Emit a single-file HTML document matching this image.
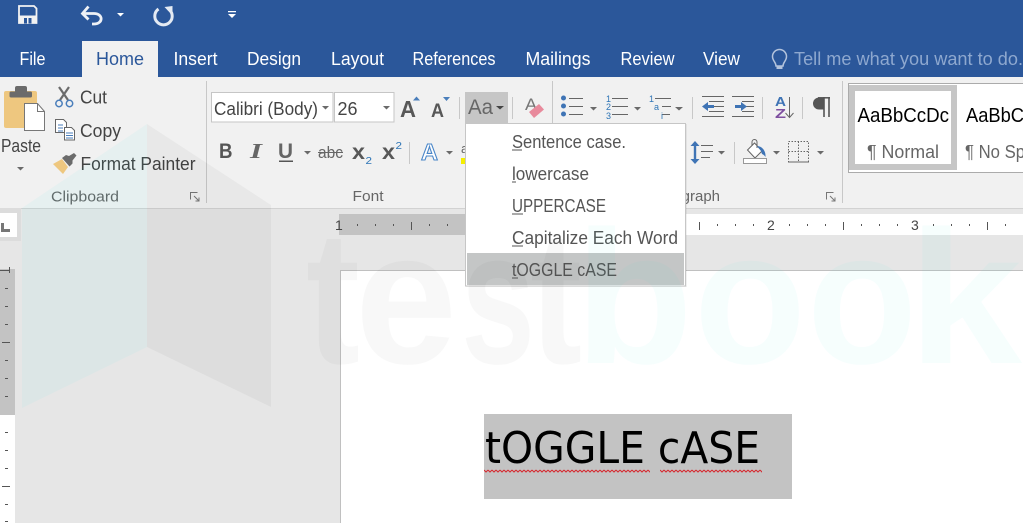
<!DOCTYPE html>
<html><head><meta charset="utf-8"><title>Toggle case</title>
<style>
html,body{margin:0;padding:0;background:#fff;width:1023px;height:532px;overflow:hidden}
svg{display:block;font-family:"Liberation Sans",sans-serif}
.tab{font-size:18px;fill:#fff}
.rb{font-size:18px;fill:#444}
.gl{font-size:15px;fill:#666}
.mi{font-size:18px;fill:#555}
.tri{fill:#6a6a6a}
.sep{stroke:#c8c8c8;stroke-width:1}
.ln{stroke:#666;stroke-width:1;fill:none}
</style></head><body>
<svg width="1023" height="532" viewBox="0 0 1023 532" xmlns="http://www.w3.org/2000/svg">
<defs>
<pattern id="wave" x="484" y="469" width="4" height="4" patternUnits="userSpaceOnUse">
<path d="M0 1l2 2 2-2" fill="none" stroke="#d6262c" stroke-width="1"/>
</pattern>
</defs>
<!-- backgrounds -->
<rect width="1023" height="532" fill="#fff"/>
<rect width="1023" height="77" fill="#2b579a"/>
<rect y="77" width="1023" height="131" fill="#f1f1f1"/>
<rect y="208" width="1023" height="315" fill="#e6e6e6"/>
<rect y="208" width="1023" height="1" fill="#d2d2d2"/>
<rect x="82" y="41" width="76" height="36" fill="#f1f1f1"/>

<!-- QAT -->
<path d="M19 6h15l2.500 2.500v14.500h-17.500z" fill="none" stroke="#f2f2f2" stroke-width="1.800"/>
<rect x="19" y="15.500" width="17.500" height="8" fill="#f2f2f2"/>
<rect x="24" y="18" width="3" height="5.500" fill="#2b579a"/>
<rect x="28.500" y="18" width="3" height="5.500" fill="#2b579a"/>
<path d="M83 13.500h11c9.500 0 9.500 10.500 0 10.500h-2" fill="none" stroke="#eef1f6" stroke-width="2.800"/>
<path d="M88.500 6.500l-6 7 6 6" fill="none" stroke="#eef1f6" stroke-width="2.800"/>
<path d="M158.500 9a8.700 8.700 0 1 0 10 0" fill="none" stroke="#e4eaf3" stroke-width="3"/>
<path d="M172.500 6v9.500l-8-8.500z" fill="#e4eaf3"/>
<path d="M117 13h7l-3.500 3.500z" fill="#fff"/>
<path d="M228 11h8v1.200h-8zM228 14h8l-4 4z" fill="#fff"/>

<!-- tabs -->
<text class="tab" x="19.500" y="65" textLength="26" lengthAdjust="spacingAndGlyphs">File</text>
<text class="tab" x="96" y="65" textLength="48" lengthAdjust="spacingAndGlyphs" style="fill:#2b579a">Home</text>
<text class="tab" x="173.500" y="65" textLength="44" lengthAdjust="spacingAndGlyphs">Insert</text>
<text class="tab" x="247" y="65" textLength="54" lengthAdjust="spacingAndGlyphs">Design</text>
<text class="tab" x="331" y="65" textLength="53" lengthAdjust="spacingAndGlyphs">Layout</text>
<text class="tab" x="412.500" y="65" textLength="83" lengthAdjust="spacingAndGlyphs">References</text>
<text class="tab" x="525.500" y="65" textLength="65" lengthAdjust="spacingAndGlyphs">Mailings</text>
<text class="tab" x="620.500" y="65" textLength="54" lengthAdjust="spacingAndGlyphs">Review</text>
<text class="tab" x="703" y="65" textLength="37" lengthAdjust="spacingAndGlyphs">View</text>
<path d="M776 66c0-4-3.500-5-3.500-9.500a7 7 0 0 1 14 0c0 4.500-3.500 5.500-3.500 9.500z" fill="none" stroke="#b3c3dc" stroke-width="1.500"/>
<rect x="776.500" y="66" width="6" height="3" fill="#b3c3dc"/>
<text class="tab" x="794" y="65" textLength="229" lengthAdjust="spacingAndGlyphs" style="fill:#8ea8cf">Tell me what you want to do.</text>

<!-- clipboard group -->
<rect x="4" y="91" width="33" height="37" rx="2" fill="#eec77f"/>
<rect x="9.500" y="91.500" width="22.500" height="6" rx="1.500" fill="#6b6b6b"/>
<rect x="15" y="86" width="12" height="7" rx="2" fill="#6b6b6b"/>
<path d="M24.500 103.500h13l7 8v19h-20z" fill="#fff" stroke="#777"/>
<path d="M37.500 103.500v8h7" fill="none" stroke="#777"/>
<text class="rb" x="1" y="152" textLength="40" lengthAdjust="spacingAndGlyphs">Paste</text>
<path d="M17 167h7l-3.500 3.500z" class="tri"/>
<path d="M59 87l9 13M69 87l-9 13" stroke="#6b6b6b" stroke-width="2.200" fill="none"/>
<circle cx="59" cy="103.500" r="3.200" fill="none" stroke="#4a7ebb" stroke-width="1.500"/>
<circle cx="69.500" cy="103.500" r="3.200" fill="none" stroke="#4a7ebb" stroke-width="1.500"/>
<text class="rb" x="80" y="103.500" textLength="27" lengthAdjust="spacingAndGlyphs">Cut</text>
<path d="M55.500 119.500h8l3 3v10h-11z" fill="#fff" stroke="#666"/>
<path d="M64.500 127.500h7l3 3v9.500h-10z" fill="#fff" stroke="#666"/>
<path d="M66 133h7M66 135.500h7M66 138h7" stroke="#4a7ebb"/>
<path d="M58 125h5M58 128h5M58 131h5" stroke="#4a7ebb"/>
<text class="rb" x="80" y="137" textLength="41" lengthAdjust="spacingAndGlyphs">Copy</text>
<path d="M53 164l9-5 6 8-5 7z" fill="#eec77f"/>
<path d="M62 158l4-3 3 1 5-3 2.500 2.500-4 5 0 3-3 3z" fill="#6b6b6b"/>
<text class="rb" x="80.500" y="170" textLength="115" lengthAdjust="spacingAndGlyphs">Format Painter</text>
<text class="gl" x="51" y="201.500" textLength="68" lengthAdjust="spacingAndGlyphs">Clipboard</text>
<path d="M190.500 199.500v-7h7M194 196l5 5M199 197.500v3.500h-3.500" fill="none" stroke="#777"/>
<path class="sep" d="M206.500 81v122"/>

<!-- font group -->
<rect x="211.500" y="92.500" width="121.500" height="29.500" fill="#fff" stroke="#c6c6c6"/>
<rect x="334.500" y="92.500" width="59.500" height="29.500" fill="#fff" stroke="#c6c6c6"/>
<text class="rb" x="214" y="115" textLength="104" lengthAdjust="spacingAndGlyphs">Calibri (Body)</text>
<text class="rb" x="337.500" y="115" textLength="20" lengthAdjust="spacingAndGlyphs">26</text>
<path d="M322 106h7l-3.500 3.500zM383 106h7l-3.500 3.500z" class="tri"/>
<text x="400" y="117" font-size="23" font-weight="bold" fill="#585858" textLength="16" lengthAdjust="spacingAndGlyphs">A</text>
<path d="M413 100.500l3.500-4 3.500 4z" fill="#4a7ebb"/>
<text x="431" y="117" font-size="19.500" font-weight="bold" fill="#585858" textLength="13" lengthAdjust="spacingAndGlyphs">A</text>
<path d="M443 97h7l-3.500 4z" fill="#4a7ebb"/>
<path class="sep" d="M459.500 97v22"/>
<rect x="465" y="92" width="43" height="32" fill="#c6c6c6"/>
<text x="468" y="114" font-size="21" fill="#666" textLength="25" lengthAdjust="spacingAndGlyphs">Aa</text>
<path d="M496 106h8l-4 3.500z" fill="#444"/>
<path class="sep" d="M512.500 97v22"/>
<text x="525" y="110" font-size="17" fill="#777" textLength="12" lengthAdjust="spacingAndGlyphs">A</text>
<path d="M529 112l10-8 5 5.500-10 8.500z" fill="#e88a9c"/>
<path class="sep" d="M552.500 81v122"/>

<text x="219" y="158" font-size="21" font-weight="bold" fill="#555" textLength="13.500" lengthAdjust="spacingAndGlyphs">B</text>
<text x="250" y="158" font-size="21" font-weight="bold" font-style="italic" fill="#666" textLength="12" lengthAdjust="spacingAndGlyphs" style="font-family:'Liberation Serif',serif">I</text>
<text x="278" y="158" font-size="21" font-weight="bold" fill="#666" textLength="15" lengthAdjust="spacingAndGlyphs">U</text>
<rect x="279" y="160.500" width="14" height="1.500" fill="#555"/>
<path d="M304 151h7l-3.500 3.500z" class="tri"/>
<text x="318" y="158" font-size="17" fill="#666" textLength="25" lengthAdjust="spacingAndGlyphs">abc</text>
<rect x="318" y="152" width="25" height="1" fill="#666"/>
<text x="352" y="159" font-size="21" font-weight="bold" fill="#585858" textLength="13" lengthAdjust="spacingAndGlyphs">x</text>
<text x="365.500" y="164" font-size="10" fill="#2e75b6" textLength="6.500" lengthAdjust="spacingAndGlyphs">2</text>
<text x="382" y="159" font-size="21" font-weight="bold" fill="#585858" textLength="13" lengthAdjust="spacingAndGlyphs">x</text>
<text x="395.500" y="149" font-size="10" fill="#2e75b6" textLength="6.500" lengthAdjust="spacingAndGlyphs">2</text>
<path class="sep" d="M409.500 142v22"/>
<text x="421" y="160" font-size="23" font-weight="bold" fill="#fff" stroke="#4a86c8" stroke-width="1.100" textLength="17" lengthAdjust="spacingAndGlyphs">A</text>
<path d="M446 151h7l-3.500 3.500z" class="tri"/>
<text x="461" y="153" font-size="13" fill="#666">a</text>
<rect x="461" y="158" width="6" height="6" fill="#f5ee00"/>
<text class="gl" x="352.500" y="201" textLength="31" lengthAdjust="spacingAndGlyphs">Font</text>

<!-- paragraph row 1 -->
<g fill="#3f74b5"><circle cx="563.500" cy="98" r="2.500"/><circle cx="563.500" cy="106" r="2.500"/><circle cx="563.500" cy="114" r="2.500"/></g>
<path class="ln" d="M569 98.500h14M569 106.500h14M569 114.500h14M612 98.500h16M612 106.500h16M612 114.500h16M655 98.500h16M662 106.500h9M662 114.500h8M702 96.500h22M709 101.500h15M709 106.500h15M709 111.500h15M702 116.500h22M732 96.500h22M742 101.500h12M742 106.500h12M742 111.500h12M732 116.500h22" stroke-width="1.200"/>
<g font-size="9" fill="#2e75b6"><text x="606" y="102">1</text><text x="606" y="110">2</text><text x="606" y="119">3</text><text x="649" y="102">1</text><text x="654" y="110">a</text><text x="661" y="119">i</text></g>
<path d="M590 107h7l-3.500 3.500zM634 107h7l-3.500 3.500zM675 107h8l-4 3.500z" class="tri"/>
<path class="sep" d="M692.500 97v22M762.500 97v22M802.500 97v22"/>
<path d="M702 106.500l6-4.500v3h6v3h-6v3zM747 106.500l-6-4.500v3h-6v3h6v3z" fill="#3f74b5"/>
<text x="775" y="106" font-size="13" font-weight="bold" fill="#3f74b5" textLength="11" lengthAdjust="spacingAndGlyphs">A</text>
<text x="775" y="118" font-size="13" font-weight="bold" fill="#7e4fa0" textLength="11" lengthAdjust="spacingAndGlyphs">Z</text>
<path d="M789.500 97v20M785.500 113l4 4.500 4-4.500" class="ln" stroke-width="1.200"/>
<path d="M824 97.500h-5a6 6 0 0 0 0 12h5z" fill="#555"/>
<path d="M818 97.800h12" stroke="#555" stroke-width="1.500"/>
<path d="M824 97v20M829 97v20" stroke="#555" stroke-width="1.600"/>

<!-- paragraph row 2 -->
<path d="M695 141l-4.500 5h9zM695 164l-4.500-5h9z" fill="#3f74b5"/><rect x="693.800" y="145" width="2.400" height="15" fill="#3f74b5"/>
<path class="ln" d="M701 145.500h12M701 151.500h12M701 157.500h9" stroke-width="1.200"/>
<path d="M718 151h7l-3.500 3.500zM773 151h7l-3.500 3.500zM817 151h7l-3.500 3.500z" class="tri"/>
<path class="sep" d="M734.500 142v22"/>
<path d="M747.500 150l7-7 7.500 8-7 7z" fill="#fff" stroke="#666"/>
<path d="M752 146v-4a2.500 2.500 0 0 1 5 0v6" fill="none" stroke="#666"/>
<path d="M757 146c5 0 9 5 8.500 11-1-1.500-2-2.500-3.500-3l-1-3z" fill="#3f74b5"/>
<rect x="743.500" y="158.500" width="23" height="5" fill="#fff" stroke="#999"/>
<path d="M788.500 141.500h20v20.500h-20zM798.500 141.500v20.500M788.500 151.500h20" fill="none" stroke="#666" stroke-dasharray="1.500 1.500"/>
<path d="M788 162h21" stroke="#666"/>
<text class="gl" x="650" y="201" textLength="70" lengthAdjust="spacingAndGlyphs">Paragraph</text>
<path d="M826.500 199.500v-7h7M830 196l5 5M835 197.500v3.500h-3.500" fill="none" stroke="#777"/>
<path class="sep" d="M842.500 81v122"/>

<!-- styles -->
<rect x="848.500" y="83.500" width="180" height="89" fill="#fff" stroke="#ababab"/>
<rect x="849" y="85" width="108" height="85" fill="#c6c6c6"/>
<rect x="855" y="91" width="96" height="73" fill="#fff"/>
<text x="857.500" y="122" font-size="20" fill="#000" textLength="91.500" lengthAdjust="spacingAndGlyphs">AaBbCcDc</text>
<text x="867" y="158" font-size="18" fill="#666" textLength="72" lengthAdjust="spacingAndGlyphs">¶ Normal</text>
<text x="966" y="122" font-size="20" fill="#000" textLength="58" lengthAdjust="spacingAndGlyphs">AaBbC</text>
<text x="965" y="158" font-size="18" fill="#666" textLength="60" lengthAdjust="spacingAndGlyphs">¶ No Sp</text>

<!-- rulers -->
<rect x="0" y="208" width="21" height="33" fill="#dcdcdc"/>
<rect x="0" y="213" width="17" height="24" fill="#fff"/>
<path d="M1 223h3v6h6v3h-9z" fill="#777"/>
<rect x="339" y="214" width="684" height="21" fill="#fff"/>
<rect x="339" y="214" width="144" height="21" fill="#c3c3c3"/>
<g fill="#555">
<rect x="357" y="224" width="1" height="2"/><rect x="375" y="224" width="1" height="2"/><rect x="393" y="224" width="1" height="2"/><rect x="411" y="222" width="1" height="8"/><rect x="429" y="224" width="1" height="2"/><rect x="447" y="224" width="1" height="2"/>
<rect x="699" y="222" width="1" height="8"/><rect x="717" y="224" width="1" height="2"/><rect x="735" y="224" width="1" height="2"/><rect x="753" y="224" width="1" height="2"/><rect x="789" y="224" width="1" height="2"/><rect x="807" y="224" width="1" height="2"/><rect x="825" y="224" width="1" height="2"/><rect x="843" y="222" width="1" height="8"/><rect x="861" y="224" width="1" height="2"/><rect x="879" y="224" width="1" height="2"/><rect x="897" y="224" width="1" height="2"/><rect x="933" y="224" width="1" height="2"/><rect x="951" y="224" width="1" height="2"/><rect x="969" y="224" width="1" height="2"/><rect x="987" y="222" width="1" height="8"/><rect x="1005" y="224" width="1" height="2"/>
</g>
<g font-size="14" fill="#444"><text x="335" y="230">1</text><text x="767" y="230">2</text><text x="911" y="230">3</text></g>
<rect x="0" y="415" width="15" height="108" fill="#fff"/>
<rect x="0" y="269" width="15" height="146" fill="#c3c3c3"/>
<g fill="#555">
<rect x="0" y="270" width="10" height="1"/><rect x="9" y="267" width="1" height="6"/>
<rect x="5" y="288" width="3" height="1"/><rect x="5" y="306" width="3" height="1"/><rect x="5" y="324" width="3" height="1"/><rect x="2" y="342" width="8" height="1"/><rect x="5" y="360" width="3" height="1"/><rect x="5" y="378" width="3" height="1"/><rect x="5" y="396" width="3" height="1"/>
<rect x="5" y="432" width="3" height="1"/><rect x="5" y="450" width="3" height="1"/><rect x="5" y="468" width="3" height="1"/><rect x="2" y="486" width="8" height="1"/><rect x="5" y="504" width="3" height="1"/><rect x="5" y="521" width="3" height="1"/>
</g>

<!-- page -->
<rect x="340.500" y="270.500" width="690" height="270" fill="#fff" stroke="#c0c0c0"/>
<rect x="0" y="523" width="1023" height="9" fill="#fff"/>
<rect x="484" y="414" width="308" height="85" fill="#c3c3c3"/>
<text x="485" y="463" font-size="44" fill="#000" textLength="275" lengthAdjust="spacingAndGlyphs" style="font-family:'DejaVu Sans',sans-serif">tOGGLE cASE</text>
<rect x="484" y="469" width="166" height="4" fill="url(#wave)"/>
<rect x="660" y="469" width="102" height="4" fill="url(#wave)"/>

<!-- menu -->
<rect x="466" y="124" width="221" height="163" fill="#000" opacity=".06"/>
<rect x="465.500" y="123.500" width="220" height="162.500" fill="#fff" stroke="#c6c6c6"/>
<rect x="467" y="253" width="217" height="32" fill="#c4c6c6"/>
<text class="mi" x="512" y="148" textLength="114" lengthAdjust="spacingAndGlyphs">Sentence case.</text>
<text class="mi" x="512" y="180" textLength="77" lengthAdjust="spacingAndGlyphs">lowercase</text>
<text class="mi" x="512" y="212" textLength="94" lengthAdjust="spacingAndGlyphs">UPPERCASE</text>
<text class="mi" x="512" y="244" textLength="166" lengthAdjust="spacingAndGlyphs">Capitalize Each Word</text>
<text class="mi" x="512" y="276" textLength="105" lengthAdjust="spacingAndGlyphs">tOGGLE cASE</text>
<g fill="#555"><rect x="512" y="149.500" width="10" height="1"/><rect x="512" y="181.500" width="4" height="1"/><rect x="512" y="213.500" width="11" height="1"/><rect x="512" y="245.500" width="11" height="1"/><rect x="512" y="277.500" width="6" height="1"/></g>

<!-- watermark -->
<path d="M147 124L22 208V408L147 347z" fill="#00e6e1" opacity=".045"/>
<path d="M147 124L271 205V407L147 347z" fill="#000" opacity=".035"/>
<g font-size="190" font-weight="bold">
<g fill="#000" opacity=".024">
<text x="306" y="363" textLength="54" lengthAdjust="spacingAndGlyphs">t</text>
<text x="355" y="363" textLength="102" lengthAdjust="spacingAndGlyphs">e</text>
<text x="461" y="363" textLength="74" lengthAdjust="spacingAndGlyphs">s</text>
<text x="530" y="363" textLength="52" lengthAdjust="spacingAndGlyphs">t</text>
</g>
<g fill="#00e6e1" opacity=".03">
<text x="575" y="363" textLength="118" lengthAdjust="spacingAndGlyphs">b</text>
<text x="694" y="363" textLength="112" lengthAdjust="spacingAndGlyphs">o</text>
<text x="807" y="363" textLength="110" lengthAdjust="spacingAndGlyphs">o</text>
<text x="908" y="363" textLength="114" lengthAdjust="spacingAndGlyphs">k</text>
</g>
</g>
</svg>
</body></html>
